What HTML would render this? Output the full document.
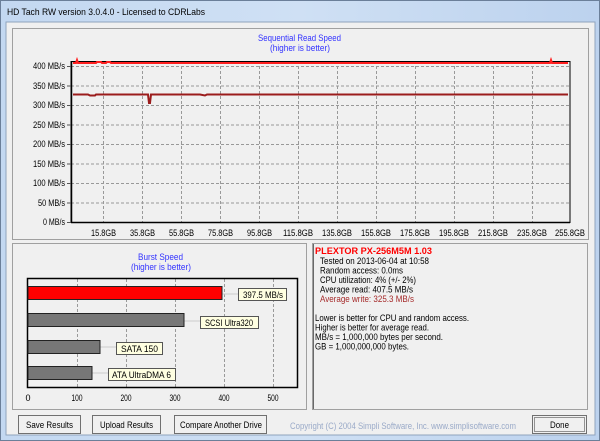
<!DOCTYPE html>
<html><head><meta charset="utf-8"><style>
html,body{margin:0;padding:0;width:600px;height:441px;overflow:hidden;background:#f0f0f0}
svg{display:block}
text{font-family:"Liberation Sans",sans-serif;font-size:9px}
</style></head><body>
<svg width="600" height="441" viewBox="0 0 600 441" xmlns="http://www.w3.org/2000/svg">
<defs><linearGradient id="tb" x1="0" y1="0" x2="1" y2="0"><stop offset="0" stop-color="#c3d8f1"/><stop offset="0.5" stop-color="#cfe0f4"/><stop offset="1" stop-color="#bcd2ee"/></linearGradient></defs>
<rect x="0" y="0" width="600" height="441" fill="url(#tb)"/>
<rect x="0.5" y="0.5" width="599" height="440" fill="none" stroke="#6b7f99"/>
<text x="7" y="15" font-size="11" fill="#000" textLength="198" lengthAdjust="spacingAndGlyphs">HD Tach RW version 3.0.4.0 - Licensed to CDRLabs</text>
<rect x="6" y="22" width="589" height="413" fill="#f0f0f0" stroke="#8fa3bd"/>
<rect x="12.5" y="28.5" width="576" height="211" fill="#f0f0f0" stroke="#a0a0a0"/>
<text x="258" y="41" fill="#3333ff" textLength="83" lengthAdjust="spacingAndGlyphs">Sequential Read Speed</text>
<text x="270" y="51" fill="#3333ff" textLength="60" lengthAdjust="spacingAndGlyphs">(higher is better)</text>
<g stroke="#999" stroke-dasharray="3,2" stroke-width="1">
<line x1="71" y1="66.5" x2="570" y2="66.5"/><line x1="71" y1="86" x2="570" y2="86"/><line x1="71" y1="105.5" x2="570" y2="105.5"/><line x1="71" y1="125" x2="570" y2="125"/><line x1="71" y1="144.5" x2="570" y2="144.5"/><line x1="71" y1="164" x2="570" y2="164"/><line x1="71" y1="183.5" x2="570" y2="183.5"/><line x1="71" y1="203" x2="570" y2="203"/>
<line x1="103.5" y1="61" x2="103.5" y2="222"/><line x1="142.5" y1="61" x2="142.5" y2="222"/><line x1="181.5" y1="61" x2="181.5" y2="222"/><line x1="220.5" y1="61" x2="220.5" y2="222"/><line x1="259.5" y1="61" x2="259.5" y2="222"/><line x1="298.5" y1="61" x2="298.5" y2="222"/><line x1="337.5" y1="61" x2="337.5" y2="222"/><line x1="376.5" y1="61" x2="376.5" y2="222"/><line x1="415.5" y1="61" x2="415.5" y2="222"/><line x1="454.5" y1="61" x2="454.5" y2="222"/><line x1="493.5" y1="61" x2="493.5" y2="222"/><line x1="532.5" y1="61" x2="532.5" y2="222"/>
</g>
<rect x="71" y="61.5" width="499" height="161" fill="none" stroke="#000" stroke-width="1"/>
<line x1="71" y1="222.5" x2="570" y2="222.5" stroke="#000" stroke-width="1.5"/>
<line x1="71.5" y1="61" x2="71.5" y2="223" stroke="#000" stroke-width="1.5"/>
<g stroke="#555"><line x1="67" y1="66.5" x2="71" y2="66.5"/><line x1="67" y1="86" x2="71" y2="86"/><line x1="67" y1="105.5" x2="71" y2="105.5"/><line x1="67" y1="125" x2="71" y2="125"/><line x1="67" y1="144.5" x2="71" y2="144.5"/><line x1="67" y1="164" x2="71" y2="164"/><line x1="67" y1="183.5" x2="71" y2="183.5"/><line x1="67" y1="203" x2="71" y2="203"/><line x1="67" y1="222.5" x2="71" y2="222.5"/></g>
<polyline points="73,63 76,63 77,60 78,63 96,63 97,62 101,62 102,63 106,63 107,62 110,62 111,63 550,63 551,60 552,63 568,63" fill="none" stroke="#ff2020" stroke-width="2"/>
<polyline points="73,94.5 88,94.5 90,95.5 95,95.5 96,94.5 148,94.5 149,103 150,103 151,94.5 200,94.5 205,95.5 207,94.5 568,94.5" fill="none" stroke="#9b1c1c" stroke-width="2"/>
<g fill="#000" font-size="8.5">
<text x="33" y="69" textLength="32" lengthAdjust="spacingAndGlyphs">400 MB/s</text><text x="33" y="89" textLength="32" lengthAdjust="spacingAndGlyphs">350 MB/s</text><text x="33" y="108" textLength="32" lengthAdjust="spacingAndGlyphs">300 MB/s</text><text x="33" y="128" textLength="32" lengthAdjust="spacingAndGlyphs">250 MB/s</text><text x="33" y="147" textLength="32" lengthAdjust="spacingAndGlyphs">200 MB/s</text><text x="33" y="167" textLength="32" lengthAdjust="spacingAndGlyphs">150 MB/s</text><text x="33" y="186" textLength="32" lengthAdjust="spacingAndGlyphs">100 MB/s</text><text x="38" y="206" textLength="27" lengthAdjust="spacingAndGlyphs">50 MB/s</text><text x="43" y="225" textLength="22" lengthAdjust="spacingAndGlyphs">0 MB/s</text>
</g>
<g fill="#000" font-size="8.5">
<text x="91" y="236" textLength="25" lengthAdjust="spacingAndGlyphs">15.8GB</text><text x="130" y="236" textLength="25" lengthAdjust="spacingAndGlyphs">35.8GB</text><text x="169" y="236" textLength="25" lengthAdjust="spacingAndGlyphs">55.8GB</text><text x="208" y="236" textLength="25" lengthAdjust="spacingAndGlyphs">75.8GB</text><text x="247" y="236" textLength="25" lengthAdjust="spacingAndGlyphs">95.8GB</text><text x="283" y="236" textLength="30" lengthAdjust="spacingAndGlyphs">115.8GB</text><text x="322" y="236" textLength="30" lengthAdjust="spacingAndGlyphs">135.8GB</text><text x="361" y="236" textLength="30" lengthAdjust="spacingAndGlyphs">155.8GB</text><text x="400" y="236" textLength="30" lengthAdjust="spacingAndGlyphs">175.8GB</text><text x="439" y="236" textLength="30" lengthAdjust="spacingAndGlyphs">195.8GB</text><text x="478" y="236" textLength="30" lengthAdjust="spacingAndGlyphs">215.8GB</text><text x="517" y="236" textLength="30" lengthAdjust="spacingAndGlyphs">235.8GB</text><text x="555" y="236" textLength="30" lengthAdjust="spacingAndGlyphs">255.8GB</text>
</g>
<rect x="12.5" y="243.5" width="294" height="166" fill="#f0f0f0" stroke="#a0a0a0"/>
<text x="138" y="260" fill="#3333ff" textLength="45" lengthAdjust="spacingAndGlyphs">Burst Speed</text>
<text x="131" y="270" fill="#3333ff" textLength="60" lengthAdjust="spacingAndGlyphs">(higher is better)</text>
<g stroke="#999" stroke-dasharray="3,2"><line x1="77.5" y1="279" x2="77.5" y2="387"/><line x1="126.5" y1="279" x2="126.5" y2="387"/><line x1="175.5" y1="279" x2="175.5" y2="387"/><line x1="224.5" y1="279" x2="224.5" y2="387"/><line x1="273.5" y1="279" x2="273.5" y2="387"/></g>
<rect x="27.5" y="278.5" width="270" height="109" fill="none" stroke="#000" stroke-width="1.5"/>
<g stroke="#ccc"><line x1="222" y1="294" x2="238" y2="294"/><line x1="184" y1="321" x2="200" y2="321"/><line x1="100" y1="347" x2="116" y2="347"/><line x1="92" y1="373" x2="108" y2="373"/></g>
<rect x="28" y="286.5" width="194" height="13" fill="#ff0000" stroke="#222"/>
<rect x="28" y="313.5" width="156" height="13" fill="#777" stroke="#222"/>
<rect x="28" y="340.5" width="72" height="13" fill="#777" stroke="#222"/>
<rect x="28" y="366.5" width="64" height="13" fill="#777" stroke="#222"/>
<g fill="#ffffe1" stroke="#555"><rect x="238.5" y="288.5" width="48" height="12"/><rect x="200.5" y="316.5" width="58" height="12"/><rect x="116.5" y="342.5" width="46" height="12"/><rect x="108.5" y="368.5" width="67" height="12"/></g>
<g font-size="9" fill="#000"><text x="243" y="298" textLength="40" lengthAdjust="spacingAndGlyphs">397.5 MB/s</text><text x="205" y="326" textLength="48" lengthAdjust="spacingAndGlyphs">SCSI Ultra320</text><text x="121" y="352" textLength="37" lengthAdjust="spacingAndGlyphs">SATA 150</text><text x="112" y="378" textLength="59" lengthAdjust="spacingAndGlyphs">ATA UltraDMA 6</text></g>
<g font-size="8.5" fill="#000" text-anchor="middle"><text x="28" y="401">0</text><text x="77" y="401" textLength="11" lengthAdjust="spacingAndGlyphs">100</text><text x="126" y="401" textLength="11" lengthAdjust="spacingAndGlyphs">200</text><text x="175" y="401" textLength="11" lengthAdjust="spacingAndGlyphs">300</text><text x="224" y="401" textLength="11" lengthAdjust="spacingAndGlyphs">400</text><text x="273" y="401" textLength="11" lengthAdjust="spacingAndGlyphs">500</text></g>
<rect x="312.5" y="243.5" width="275" height="166" fill="#f0f0f0" stroke="#a0a0a0"/>
<line x1="313.5" y1="244" x2="313.5" y2="409" stroke="#696969"/>
<text x="315" y="254" font-weight="bold" font-size="10" fill="#ff0000" textLength="117" lengthAdjust="spacingAndGlyphs">PLEXTOR PX-256M5M 1.03</text>
<g font-size="9" fill="#000"><text x="320" y="264" textLength="109" lengthAdjust="spacingAndGlyphs">Tested on 2013-06-04 at 10:58</text><text x="320" y="273.5" textLength="83" lengthAdjust="spacingAndGlyphs">Random access: 0.0ms</text><text x="320" y="283" textLength="96" lengthAdjust="spacingAndGlyphs">CPU utilization: 4% (+/- 2%)</text><text x="320" y="292.5" textLength="93" lengthAdjust="spacingAndGlyphs">Average read: 407.5 MB/s</text><text x="320" y="302" fill="#a52a2a" textLength="94" lengthAdjust="spacingAndGlyphs">Average write: 325.3 MB/s</text>
<text x="315" y="321" textLength="154" lengthAdjust="spacingAndGlyphs">Lower is better for CPU and random access.</text><text x="315" y="330.5" textLength="114" lengthAdjust="spacingAndGlyphs">Higher is better for average read.</text><text x="315" y="340" textLength="128" lengthAdjust="spacingAndGlyphs">MB/s = 1,000,000 bytes per second.</text><text x="315" y="349.5" textLength="94" lengthAdjust="spacingAndGlyphs">GB = 1,000,000,000 bytes.</text></g>
<g fill="#f0f0f0" stroke="#707070"><rect x="18.5" y="415.5" width="62" height="18"/><rect x="92.5" y="415.5" width="68" height="18"/><rect x="174.5" y="415.5" width="92" height="18"/><rect x="532.5" y="415.5" width="54" height="18"/></g>
<rect x="534.5" y="417.5" width="50" height="14" fill="none" stroke="#333" stroke-dasharray="1,1"/>
<g font-size="9" fill="#000"><text x="26" y="428" textLength="47" lengthAdjust="spacingAndGlyphs">Save Results</text><text x="100" y="428" textLength="53" lengthAdjust="spacingAndGlyphs">Upload Results</text><text x="180" y="428" textLength="82" lengthAdjust="spacingAndGlyphs">Compare Another Drive</text><text x="550" y="428" textLength="19" lengthAdjust="spacingAndGlyphs">Done</text></g>
<text x="290" y="429" fill="#9aaac8" textLength="226" lengthAdjust="spacingAndGlyphs">Copyright (C) 2004 Simpli Software, Inc. www.simplisoftware.com</text>
</svg>
</body></html>
